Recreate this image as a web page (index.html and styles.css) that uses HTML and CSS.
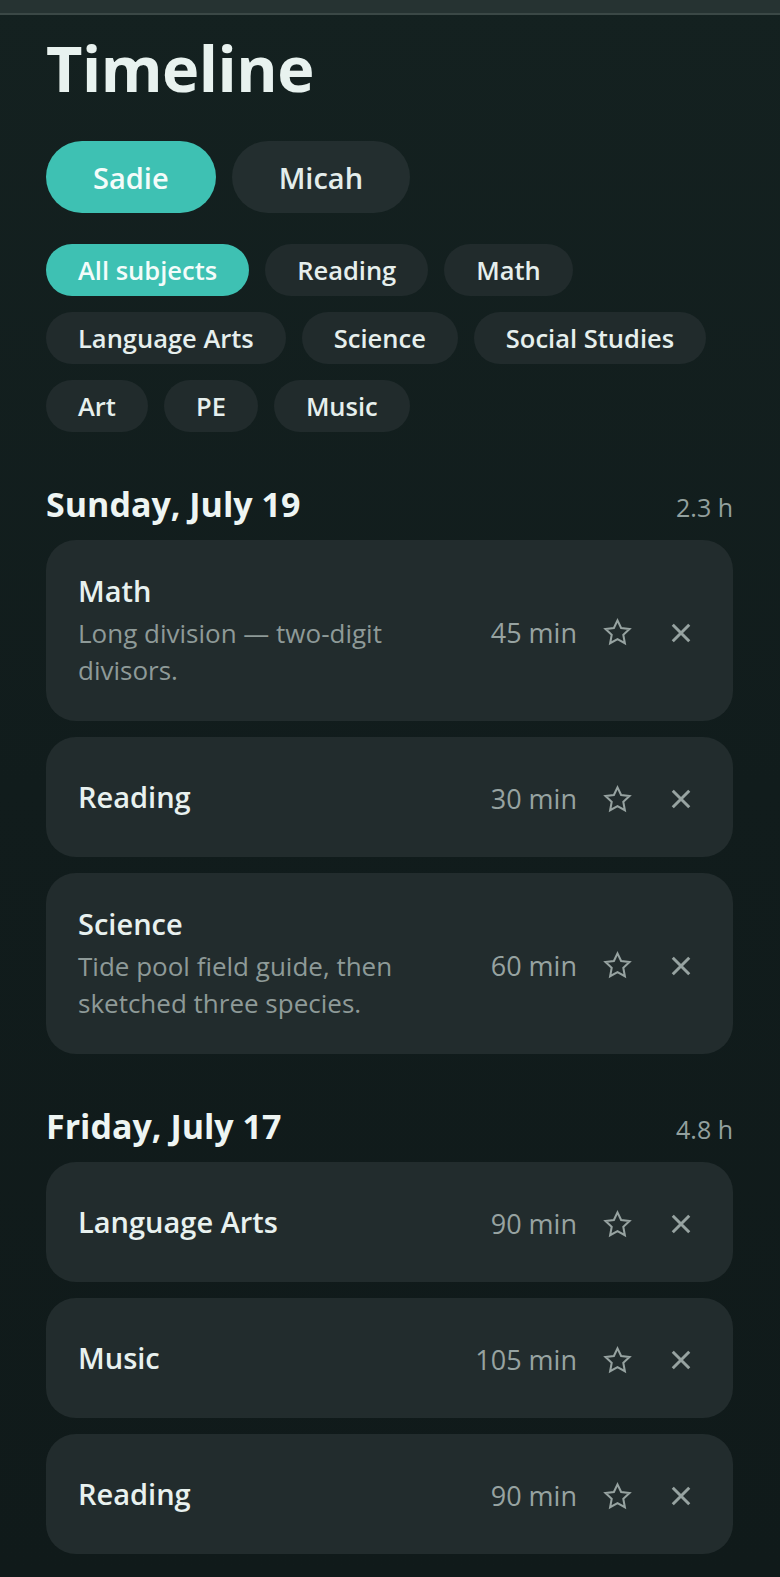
FILE: index.html
```html
<!DOCTYPE html>
<html lang="en">
<head>
    <meta charset="UTF-8">
    <meta name="viewport" content="width=device-width, initial-scale=1.0">
    <title>Timeline</title>
    <link rel="stylesheet" href="styles.css">
</head>
<body>

    <div class="topbar"></div>

    <main class="page">
        <h1 class="title">Timeline</h1>

        <!-- Selector de alumno -->
        <div class="kids">
            <button type="button" class="kid active">Sadie</button>
            <button type="button" class="kid">Micah</button>
        </div>

        <!-- Filtro por materia -->
        <div class="chips">
            <button type="button" class="chip active">All subjects</button>
            <button type="button" class="chip">Reading</button>
            <button type="button" class="chip">Math</button>
            <button type="button" class="chip">Language Arts</button>
            <button type="button" class="chip">Science</button>
            <button type="button" class="chip">Social Studies</button>
            <button type="button" class="chip">Art</button>
            <button type="button" class="chip">PE</button>
            <button type="button" class="chip">Music</button>
        </div>

        <section class="day">
            <div class="day-head">
                <h2>Sunday, July 19</h2>
                <span class="day-total">2.3 h</span>
            </div>
            <ul class="entries">
                <li class="entry">
                    <div class="entry-main">
                        <div class="entry-subject">Math</div>
                        <div class="entry-note">Long division — two-digit divisors.</div>
                    </div>
                    <span class="entry-min">45 min</span>
                    <button type="button" class="icon-btn star" aria-label="Star">
                        <svg viewBox="0 0 24 24"><path d="M12 2.6l2.8 5.9 6.5.8-4.8 4.5 1.2 6.5L12 17.1l-5.7 3.2 1.2-6.5-4.8-4.5 6.5-.8z"/></svg>
                    </button>
                    <button type="button" class="icon-btn close" aria-label="Delete">
                        <svg viewBox="0 0 24 24"><path d="M3 3l18 18M21 3L3 21"/></svg>
                    </button>
                </li>
                <li class="entry">
                    <div class="entry-main">
                        <div class="entry-subject">Reading</div>
                    </div>
                    <span class="entry-min">30 min</span>
                    <button type="button" class="icon-btn star" aria-label="Star">
                        <svg viewBox="0 0 24 24"><path d="M12 2.6l2.8 5.9 6.5.8-4.8 4.5 1.2 6.5L12 17.1l-5.7 3.2 1.2-6.5-4.8-4.5 6.5-.8z"/></svg>
                    </button>
                    <button type="button" class="icon-btn close" aria-label="Delete">
                        <svg viewBox="0 0 24 24"><path d="M3 3l18 18M21 3L3 21"/></svg>
                    </button>
                </li>
                <li class="entry">
                    <div class="entry-main">
                        <div class="entry-subject">Science</div>
                        <div class="entry-note">Tide pool field guide, then sketched three species.</div>
                    </div>
                    <span class="entry-min">60 min</span>
                    <button type="button" class="icon-btn star" aria-label="Star">
                        <svg viewBox="0 0 24 24"><path d="M12 2.6l2.8 5.9 6.5.8-4.8 4.5 1.2 6.5L12 17.1l-5.7 3.2 1.2-6.5-4.8-4.5 6.5-.8z"/></svg>
                    </button>
                    <button type="button" class="icon-btn close" aria-label="Delete">
                        <svg viewBox="0 0 24 24"><path d="M3 3l18 18M21 3L3 21"/></svg>
                    </button>
                </li>
            </ul>
        </section>

        <section class="day">
            <div class="day-head">
                <h2>Friday, July 17</h2>
                <span class="day-total">4.8 h</span>
            </div>
            <ul class="entries">
                <li class="entry">
                    <div class="entry-main">
                        <div class="entry-subject">Language Arts</div>
                    </div>
                    <span class="entry-min">90 min</span>
                    <button type="button" class="icon-btn star" aria-label="Star">
                        <svg viewBox="0 0 24 24"><path d="M12 2.6l2.8 5.9 6.5.8-4.8 4.5 1.2 6.5L12 17.1l-5.7 3.2 1.2-6.5-4.8-4.5 6.5-.8z"/></svg>
                    </button>
                    <button type="button" class="icon-btn close" aria-label="Delete">
                        <svg viewBox="0 0 24 24"><path d="M3 3l18 18M21 3L3 21"/></svg>
                    </button>
                </li>
                <li class="entry">
                    <div class="entry-main">
                        <div class="entry-subject">Music</div>
                    </div>
                    <span class="entry-min">105 min</span>
                    <button type="button" class="icon-btn star" aria-label="Star">
                        <svg viewBox="0 0 24 24"><path d="M12 2.6l2.8 5.9 6.5.8-4.8 4.5 1.2 6.5L12 17.1l-5.7 3.2 1.2-6.5-4.8-4.5 6.5-.8z"/></svg>
                    </button>
                    <button type="button" class="icon-btn close" aria-label="Delete">
                        <svg viewBox="0 0 24 24"><path d="M3 3l18 18M21 3L3 21"/></svg>
                    </button>
                </li>
                <li class="entry">
                    <div class="entry-main">
                        <div class="entry-subject">Reading</div>
                    </div>
                    <span class="entry-min">90 min</span>
                    <button type="button" class="icon-btn star" aria-label="Star">
                        <svg viewBox="0 0 24 24"><path d="M12 2.6l2.8 5.9 6.5.8-4.8 4.5 1.2 6.5L12 17.1l-5.7 3.2 1.2-6.5-4.8-4.5 6.5-.8z"/></svg>
                    </button>
                    <button type="button" class="icon-btn close" aria-label="Delete">
                        <svg viewBox="0 0 24 24"><path d="M3 3l18 18M21 3L3 21"/></svg>
                    </button>
                </li>
            </ul>
        </section>
    </main>

</body>
</html>
```

FILE: styles.css
```css
html, body {
    margin: 0;
    padding: 0;
}
body {
    font-family: "Open Sans", "Noto Sans", sans-serif;
    background: linear-gradient(180deg, #142120 0%, #111c1c 50%, #101a1a 100%);
    color: #e6f0ee;
    min-height: 1577px;
}
button {
    font-family: inherit;
    border: none;
    cursor: pointer;
}
.topbar {
    height: 13px;
    background-color: #263332;
    border-bottom: 2px solid #3b4846;
}
.page {
    width: 687px;
    padding: 0 47px 0 46px;
}
.title {
    margin: 15px 0 0;
    font-size: 63px;
    line-height: 76px;
    font-weight: 700;
    color: #e8f2ef;
    letter-spacing: -0.5px;
}

/* alumnos */
.kids {
    display: flex;
    gap: 16px;
    margin-top: 35px;
}
.kid {
    height: 72px;
    padding: 0 47px;
    border-radius: 36px;
    background-color: #232e2f;
    color: #e3edeb;
    font-size: 29px;
    font-weight: 600;
}
.kid.active {
    background-color: #3ec1b3;
    color: #f4fcfa;
}

/* materias */
.chips {
    display: flex;
    flex-wrap: wrap;
    gap: 16px;
    margin-top: 31px;
}
.chip {
    height: 52px;
    padding: 0 32px;
    border-radius: 26px;
    background-color: #212b2c;
    color: #e6efed;
    font-size: 25.5px;
    font-weight: 600;
}
.chip.active {
    background-color: #3ec1b3;
    color: #f4fcfa;
}

/* días */
.day {
    margin-top: 50px;
}
.day-head {
    display: flex;
    justify-content: space-between;
    align-items: baseline;
    margin-bottom: 14px;
}
.day-head h2 {
    margin: 0;
    font-size: 34px;
    line-height: 44px;
    font-weight: 700;
    color: #eef5f3;
}
.day-total {
    font-size: 25px;
    color: #93a09e;
}
.entries {
    list-style: none;
    margin: 0;
    padding: 0;
    display: flex;
    flex-direction: column;
    gap: 16px;
}
.entry {
    display: flex;
    align-items: center;
    padding: 32px 24px 32px 32px;
    border-radius: 30px;
    background-color: #222c2d;
}
.entry-main {
    flex: 1;
    margin-right: 24px;
}
.entry-subject {
    font-size: 29px;
    line-height: 38px;
    font-weight: 600;
    color: #e8f1ef;
}
.entry-note {
    margin-top: 5px;
    font-size: 26px;
    line-height: 37px;
    color: #8e9a98;
}
.entry-min {
    margin-right: 12px;
    padding-top: 3px;
    font-size: 27px;
    color: #97a3a1;
}
.icon-btn {
    width: 56px;
    height: 56px;
    padding: 0;
    background: none;
    display: flex;
    align-items: center;
    justify-content: center;
}
.icon-btn + .icon-btn {
    margin-left: 8px;
}
.icon-btn svg {
    fill: none;
    stroke: #97a3a1;
}
.star svg {
    width: 31px;
    height: 31px;
    margin-top: 4px;
    stroke-width: 1.6;
    stroke-linejoin: miter;
}
.close svg {
    width: 22px;
    height: 22px;
    margin-top: 4px;
    stroke-width: 3.2;
}
```
